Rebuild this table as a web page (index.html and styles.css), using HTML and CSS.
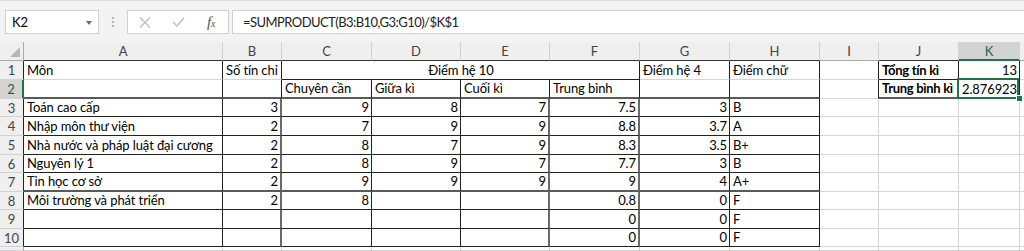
FILE: index.html
```html
<!DOCTYPE html>
<html lang="vi">
<head>
<meta charset="UTF-8">
<meta name="viewport" content="width=device-width, initial-scale=1.0">
<title>Bảng điểm</title>
<link rel="stylesheet" href="styles.css">
</head>
<body>
    <!-- thanh công thức -->
    <div class="formula-bar">
        <div class="name-box">K2<span class="arrow"></span></div>
        <div class="grip"><i></i><i></i><i></i></div>
        <div class="buttons">
            <svg class="btn-cancel" width="12" height="11" viewBox="0 0 12 11"><path d="M1 0.5 L11 10.5 M11 0.5 L1 10.5" stroke="#bdbdbd" stroke-width="1.3" fill="none"/></svg>
            <svg class="btn-enter" width="13" height="10" viewBox="0 0 13 10"><path d="M1 5 L5 9 L12 1" stroke="#bdbdbd" stroke-width="1.4" fill="none"/></svg>
            <span class="fx"><i>f</i><i class="sub">x</i></span>
        </div>
        <div class="formula">=SUMPRODUCT(B3:B10,G3:G10)/$K$1</div>
    </div>

    <!-- bảng tính -->
    <div class="sheet">
        <!-- tiêu đề cột -->
        <div class="corner"></div>
        <div class="ch e">A</div>
        <div class="ch e">B</div>
        <div class="ch e">C</div>
        <div class="ch e">D</div>
        <div class="ch e">E</div>
        <div class="ch e">F</div>
        <div class="ch e">G</div>
        <div class="ch e">H</div>
        <div class="ch">I</div>
        <div class="ch e">J</div>
        <div class="ch active">K</div>
        <div class="ch"></div>

        <!-- dòng 1 -->
        <div class="rh edge">1</div>
        <div class="c r">Môn</div>
        <div class="c r">Số tín chỉ</div>
        <div class="c m r u span4">Điểm hệ 10</div>
        <div class="c r">Điểm hệ 4</div>
        <div class="c r">Điểm chữ</div>
        <div class="c r"></div>
        <div class="c b r u">Tổng tín kì</div>
        <div class="c n r u">13</div>
        <div class="c"></div>

        <!-- dòng 2 -->
        <div class="rh edge active">2</div>
        <div class="c r u2"></div>
        <div class="c r u2"></div>
        <div class="c r u2">Chuyên cần</div>
        <div class="c r u2">Giữa kì</div>
        <div class="c r u2">Cuối kì</div>
        <div class="c r u2">Trung bình</div>
        <div class="c r u2"></div>
        <div class="c r u2"></div>
        <div class="c r"></div>
        <div class="c b r u2">Trung bình kì</div>
        <div class="c n r u selected">2.876923<span class="handle"></span></div>
        <div class="c"></div>

        <!-- dòng 3 -->
        <div class="rh edge">3</div>
        <div class="c r u">Toán cao cấp</div>
        <div class="c n r2 u">3</div>
        <div class="c n r u">9</div>
        <div class="c n r u">8</div>
        <div class="c n r2 u">7</div>
        <div class="c n r2 u">7.5</div>
        <div class="c n r u">3</div>
        <div class="c r u">B</div>
        <div class="c"></div><div class="c"></div><div class="c"></div><div class="c"></div>

        <!-- dòng 4 -->
        <div class="rh edge">4</div>
        <div class="c r u">Nhập môn thư viện</div>
        <div class="c n r2 u">2</div>
        <div class="c n r u">7</div>
        <div class="c n r u">9</div>
        <div class="c n r2 u">9</div>
        <div class="c n r2 u">8.8</div>
        <div class="c n r u">3.7</div>
        <div class="c r u">A</div>
        <div class="c"></div><div class="c"></div><div class="c"></div><div class="c"></div>

        <!-- dòng 5 -->
        <div class="rh edge">5</div>
        <div class="c r u">Nhà nước và pháp luật đại cương</div>
        <div class="c n r2 u">2</div>
        <div class="c n r u">8</div>
        <div class="c n r u">7</div>
        <div class="c n r2 u">9</div>
        <div class="c n r2 u">8.3</div>
        <div class="c n r u">3.5</div>
        <div class="c r u">B+</div>
        <div class="c"></div><div class="c"></div><div class="c"></div><div class="c"></div>

        <!-- dòng 6 -->
        <div class="rh edge">6</div>
        <div class="c r u">Nguyên lý 1</div>
        <div class="c n r2 u">2</div>
        <div class="c n r u">8</div>
        <div class="c n r u">9</div>
        <div class="c n r2 u">7</div>
        <div class="c n r2 u">7.7</div>
        <div class="c n r u">3</div>
        <div class="c r u">B</div>
        <div class="c"></div><div class="c"></div><div class="c"></div><div class="c"></div>

        <!-- dòng 7 -->
        <div class="rh edge">7</div>
        <div class="c r u2">Tin học cơ sở</div>
        <div class="c n r2 u2">2</div>
        <div class="c n r u2">9</div>
        <div class="c n r u2">9</div>
        <div class="c n r2 u2">9</div>
        <div class="c n r2 u2">9</div>
        <div class="c n r u2">4</div>
        <div class="c r u2">A+</div>
        <div class="c"></div><div class="c"></div><div class="c"></div><div class="c"></div>

        <!-- dòng 8 -->
        <div class="rh edge">8</div>
        <div class="c r u">Môi trường và phát triển</div>
        <div class="c n r2 u">2</div>
        <div class="c n r u">8</div>
        <div class="c n r u"></div>
        <div class="c n r2 u"></div>
        <div class="c n r2 u">0.8</div>
        <div class="c n r u">0</div>
        <div class="c r u">F</div>
        <div class="c"></div><div class="c"></div><div class="c"></div><div class="c"></div>

        <!-- dòng 9 -->
        <div class="rh edge">9</div>
        <div class="c r u"></div>
        <div class="c n r2 u"></div>
        <div class="c n r u"></div>
        <div class="c n r u"></div>
        <div class="c n r2 u"></div>
        <div class="c n r2 u">0</div>
        <div class="c n r u">0</div>
        <div class="c r u">F</div>
        <div class="c"></div><div class="c"></div><div class="c"></div><div class="c"></div>

        <!-- dòng 10 -->
        <div class="rh edge">10</div>
        <div class="c r u"></div>
        <div class="c n r2 u"></div>
        <div class="c n r u"></div>
        <div class="c n r u"></div>
        <div class="c n r2 u"></div>
        <div class="c n r2 u">0</div>
        <div class="c n r u">0</div>
        <div class="c r u">F</div>
        <div class="c"></div><div class="c"></div><div class="c"></div><div class="c"></div>

        <!-- dòng 11, chỉ thấy mép trên -->
        <div class="rh"></div>
        <div class="c"></div><div class="c"></div><div class="c"></div><div class="c"></div>
        <div class="c"></div><div class="c"></div><div class="c"></div><div class="c"></div>
        <div class="c"></div><div class="c"></div><div class="c"></div><div class="c"></div>
    </div>
</body>
</html>
```

FILE: styles.css
```css
body {
    margin: 0;
    padding: 0;
    font-family: Lato, "Liberation Sans", sans-serif;
    font-size: 13px;
    letter-spacing: -0.1px;
    color: #000;
    background-color: #fff;
    height: 251px;
    overflow: hidden;
}

/* Thanh công thức */
.formula-bar {
    display: flex;
    align-items: flex-start;
    height: 42px;
    padding-top: 9px;
    box-sizing: border-box;
    background-color: #f3f3f3;
    border-top: 1px solid #e0e0e0;
}

.name-box {
    position: relative;
    width: 94px;
    height: 24px;
    margin-left: 5px;
    padding-left: 6px;
    box-sizing: border-box;
    display: flex;
    align-items: center;
    background-color: #fff;
    border: 1px solid #d0d0d0;
}

.name-box .arrow {
    position: absolute;
    right: 6px;
    top: 10px;
    border-left: 3.5px solid transparent;
    border-right: 3.5px solid transparent;
    border-top: 4px solid #6a6a6a;
}

.grip {
    width: 28px;
    height: 24px;
    display: flex;
    flex-direction: column;
    align-items: center;
    justify-content: center;
    gap: 2px;
}

.grip i {
    width: 2px;
    height: 2px;
    background-color: #b4b4b4;
}

.buttons {
    width: 102px;
    height: 24px;
    box-sizing: border-box;
    display: flex;
    align-items: center;
    padding-left: 11px;
    background-color: #fff;
    border: 1px solid #d0d0d0;
}

.btn-enter {
    margin-left: 21px;
}

.fx {
    margin-left: 22px;
    font-family: "Liberation Serif", serif;
    font-size: 15px;
    color: #555;
    line-height: 1;
}

.fx .sub {
    font-size: 10px;
}

.formula {
    flex: 1;
    height: 24px;
    margin-left: 3px;
    padding-left: 10px;
    box-sizing: border-box;
    display: flex;
    align-items: center;
    background-color: #fff;
    border: 1px solid #d0d0d0;
    border-right: none;
    color: #222;
    letter-spacing: -0.55px;
}

/* Lưới bảng tính */
.sheet {
    display: grid;
    grid-template-columns: 24px 199px 59px 90px 89px 89px 90px 90px 90px 59px 80px 61px 1fr;
    grid-template-rows: 19px 19px 19px 18px 19px 19px 18px 19px 18px 19px 18px 1fr;
    height: 209px;
}

.corner,
.ch,
.rh {
    position: relative;
    box-sizing: border-box;
    overflow: hidden;
    background-color: #efefef;
    color: #444;
    display: flex;
    align-items: center;
    justify-content: center;
}

.corner {
    border-right: 1px solid #ababab;
    border-bottom: 1px solid #ababab;
}

.corner::after {
    content: "";
    position: absolute;
    right: 3px;
    bottom: 3px;
    border-left: 10px solid transparent;
    border-bottom: 10px solid #b6b6b6;
}

.ch {
    border-right: 1px solid #d2d2d2;
    border-bottom: 1px solid #ababab;
}

.ch.e {
    border-bottom-color: #333;
}

.ch.active {
    background-color: #d3d3d3;
    color: #2b5d3f;
    border-bottom: 2px solid #217346;
}

.rh {
    border-right: 1px solid #ababab;
    border-bottom: 1px solid #d2d2d2;
}

.rh.edge {
    border-right-color: #222;
}

.rh.active {
    background-color: #d3d3d3;
    color: #2b5d3f;
    border-right: 2px solid #217346;
}

.c {
    box-sizing: border-box;
    display: flex;
    align-items: flex-end;
    padding: 0 2px 1px 3px;
    line-height: 16px;
    white-space: nowrap;
    overflow: hidden;
    border-right: 1px solid #d4d4d4;
    border-bottom: 1px solid #d4d4d4;
}

.n { justify-content: flex-end; }
.m { justify-content: center; }
.b { font-weight: bold; letter-spacing: -0.3px; }
.span4 { grid-column: span 4; }

/* Viền ô */
.r { border-right-color: #222; }
.u { border-bottom-color: #222; }
.r2 { border-right: 2px solid #6a6a6a; }
.u2 { border-bottom: 2px solid #5a5a5a; }

/* Ô đang chọn */
.selected {
    position: relative;
    overflow: visible;
}

.selected::after {
    content: "";
    position: absolute;
    left: -2px;
    top: -2px;
    width: 62px;
    height: 21px;
    box-sizing: border-box;
    border: 2px solid #217346;
}

.handle {
    position: absolute;
    right: -4px;
    bottom: -4px;
    width: 5px;
    height: 5px;
    background-color: #217346;
    border: 1px solid #fff;
    z-index: 1;
}
```
